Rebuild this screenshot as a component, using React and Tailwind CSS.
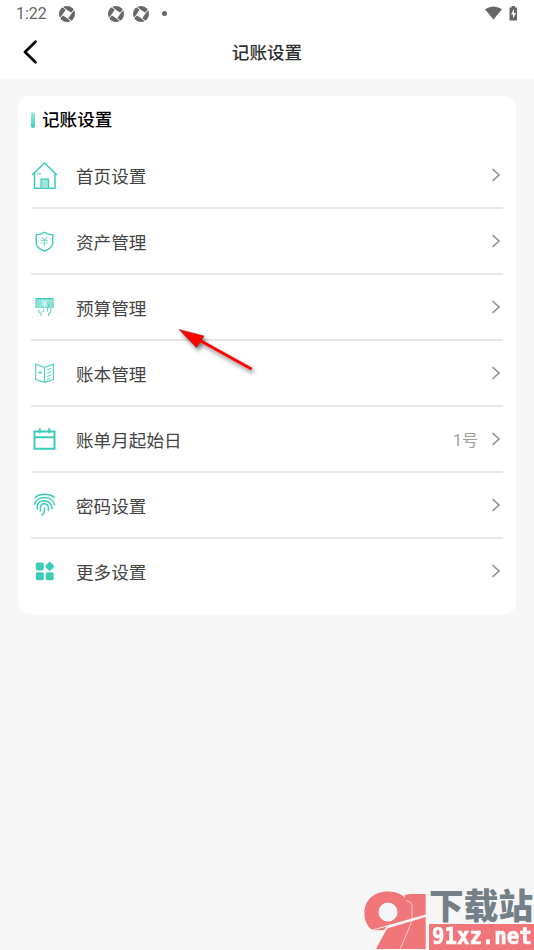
import React from "react";

const T = "#3ccdb9";

function Aperture() {
  return (
    <svg className="size-4" viewBox="0 0 16 16">
      <circle cx="8" cy="8" r="8" fill="#686868" />
      <g stroke="#fff" strokeWidth="1" fill="#fff">
        <path d="M7 3.200 12.800 7 9 12.800 3.200 9Z" stroke="none" />
        <path d="M7.500 4 3.500.8M12 7.500 15.200 3.500M8.500 12 12.500 15.200M4 8.500.8 12.500" />
      </g>
    </svg>
  );
}

const Home = () => (
  <svg className="size-7" viewBox="0 0 28 28" fill="none" stroke={T} strokeWidth="1.500">
    <path d="M1 14 13.500 2 26 14M3.500 12v15.300h20.500V12" />
    <path d="M10 27v-8.800h7.500V27" fill="#9fe6dc" strokeWidth="1.200" />
    <path d="M5.500 12.800h4.500" stroke="#9fe6dc" strokeWidth="2.200" />
  </svg>
);
const Shield = () => (
  <svg className="size-7" viewBox="0 0 28 28" fill="none" stroke={T} strokeWidth="1.400">
    <path d="M13.500 5.300c2.400 1.700 5 2.500 8.300 2.600v7.600c0 4.700-3.600 6.900-8.300 8.500-4.700-1.600-8.300-3.800-8.300-8.500V7.900c3.300-.1 5.900-.9 8.300-2.600Z" />
    <path d="m10.800 10 2.700 3.300 2.700-3.300m-2.700 3.300V19m-3.400-5.500h6.800m-6.800 2.500h6.800" stroke="#79dccf" strokeWidth="1.100" />
  </svg>
);
const Budget = () => (
  <svg className="size-7" viewBox="0 0 28 28" fill="none" stroke={T} strokeWidth="1.200">
    <path d="M4.500 5h18v10h-18Z" fill="#93e2d7" stroke="none" />
    <path d="M4.500 5.600h18" />
    <path d="M5 5.500V15M22 5.500V15" stroke="#62d7c8" strokeWidth="1" />
    <path d="m11 7 2.500 2.500L16 7m-2.500 2.500V13.500M11 10h5m-5 2h5" stroke="#effffc" strokeWidth="1" />
    <path d="M8 16.500v2.500l2 1.500v2.500M12.500 16v2l-1.500 1.200" stroke="#74dbce" />
    <path d="M16.500 18.500V16l2-5.500M19.700 15v4.200l-2 1.500v2.300" stroke="#5bd5c5" />
  </svg>
);
const Book = () => (
  <svg className="size-7" viewBox="0 0 28 28" fill="none" stroke="#55d3c3" strokeWidth="1.200">
    <path d="M13.500 8.500 4.700 5.200v15.300l8.800 2.800 8.800-2.800V5.200l-8.800 3.300v14.500" />
    <path d="m16 11 4.200-1.700M16 14.300l4.200-1.700M16 17.600l4.200-1.700M16 20.500l3-1.200M7.200 13.500h3.600M9 11.700v3.600" strokeWidth="1" />
  </svg>
);
const Calendar = () => (
  <svg className="size-7" viewBox="0 0 28 28" fill="none" stroke={T} strokeWidth="2">
    <path d="M3.500 6.500H23.500v17.300H3.500ZM3.500 12.200H23.500M8.700 3.300v5M18.300 3.300v5" />
  </svg>
);
const Finger = () => (
  <svg className="size-7" viewBox="0 0 28 28" fill="none" stroke={T} strokeWidth="1.500" strokeLinecap="round">
    <path d="M4 6.500c5.500-4.200 14-4.200 19.500 0" />
    <path d="M3.500 13.200C6 4.300 21.500 4.300 23.700 13.800" />
    <path d="M6.500 18C3.500 7.500 21 6.500 21 18" />
    <path d="M9.300 20c.6-2-.2-3 .3-4.800 1.100-3.600 7.500-3.300 7.700 1.300v3" />
    <path d="M11 24c2.800-1.500 2.500-4.300 2.500-7" />
  </svg>
);
const Grid = () => (
  <svg className="size-7" viewBox="0 0 28 28" fill={T}>
    <rect x="4.800" y="5.500" width="8" height="8" rx="1.800" />
    <rect x="4.800" y="15.300" width="8" height="8" rx="1.800" />
    <rect x="14.700" y="15.300" width="8" height="8" rx="1.800" />
    <rect x="15.200" y="5.900" width="7" height="7" rx="1.300" transform="rotate(45 18.700 9.400)" />
  </svg>
);

const rows = [
  ["首页设置", Home],
  ["资产管理", Shield],
  ["预算管理", Budget],
  ["账本管理", Book],
  ["账单月起始日", Calendar, "1号"],
  ["密码设置", Finger],
  ["更多设置", Grid],
];

export default function App() {
  return (
    <div className="relative h-[950px] w-[534px] overflow-hidden bg-[#f7f7f7] font-['Roboto','Noto_Sans_CJK_SC',sans-serif]">
      <header className="h-[78px] bg-white">
        <div className="flex h-[27px] items-center pl-4 pr-4 text-[#666]">
          <span className="w-[43px] pt-px text-[16px] leading-none">1:22</span>
          <Aperture />
          <span className="w-[33px]" />
          <Aperture />
          <span className="w-[9px]" />
          <Aperture />
          <span className="ml-[13px] size-[5px] rounded-full bg-[#666]" />
          <svg className="mb-px ml-auto h-[15px] w-[34px]" viewBox="0 0 34 15" fill="#666">
            <path d="M1 3.300Q9.500-2.300 18 3.300L9.500 13.500Z" />
            <path d="M25.500 1.500h2V0h3.500v1.500h2V14.500h-7.500Z" />
            <path d="M30 3 27 8.500h2V12.500l3-5.500h-2Z" fill="#fff" />
          </svg>
        </div>
        <div className="flex h-[50px] items-center">
          <svg className="ml-[22px] h-6 w-4" viewBox="0 0 16 24" fill="none" stroke="#000" strokeWidth="2.700" strokeLinecap="round" strokeLinejoin="round">
            <path d="M13.500 1.700 3 12l10.500 10.300" />
          </svg>
          <h1 className="mr-[38px] flex-1 pt-[3px] text-center text-[17.600px] font-medium text-[#303030]">记账设置</h1>
        </div>
      </header>
      <main className="mx-[18px] mt-[18px] h-[518px] rounded-xl bg-white px-[13px]">
        <div className="flex h-[47px] items-center">
          <span className="h-4 w-1 rounded-full bg-linear-to-b from-[#a0eae0] to-[#36cdb9]" />
          <h2 className="ml-[7px] pt-[2px] text-[17.600px] font-medium text-black">记账设置</h2>
        </div>
        {rows.map(([label, Icon, value]) => (
          <div key={label} className="flex h-[66px] items-center border-b-2 border-[#e7e7e7] last:border-transparent">
            <Icon />
            <span className="ml-[17px] pt-[4px] text-[17.600px] text-[#444]">{label}</span>
            <span className="ml-auto pt-[3px] text-[16px] text-[#a0a0a0]">{value}</span>
            <svg className="ml-[13px] mr-[2px] h-4 w-[10px]" viewBox="0 0 10 16" fill="none" stroke="#949494" strokeWidth="1.700">
              <path d="m1.500 2 6.500 6-6.500 6" />
            </svg>
          </div>
        ))}
      </main>
      <svg className="absolute left-[170px] top-[320px] h-[64px] w-[95px] drop-shadow-[2px_3px_2px_rgba(0,0,0,0.5)]" viewBox="0 0 95 64">
        <path d="M30 20.500 80.500 48.500" stroke="#f00" strokeWidth="3" strokeLinecap="round" />
        <path d="M9 9.500 34 16 31.500 20.500 26.500 27.500Z" fill="#f00" stroke="#a22" strokeWidth=".6" />
      </svg>
      <div className="absolute bottom-0 right-0 flex h-[62px] w-[174px]">
        <svg className="h-[62px] w-[69px] shrink-0" viewBox="0 0 69 62">
          <g fill="#f07679">
            <path fillRule="evenodd" d="M27 3.500c8 0 13.500 2 18 6V7l5-1h15.700v20.500L12 41.800C7 38 4.400 32.500 4.400 25 4.400 12.500 14 3.500 27 3.500Zm1 11a9.500 9.500 0 1 0 0 19 9.500 9.500 0 0 0 0-19Z" />
            <path d="M27 40.500 65.700 29v32H16Z" />
            <path d="M12.500 42.500 27 38.500 24 42Z" />
          </g>
          <path d="M46 12.500Q52 14 52 18v14Q50 39 40 61" fill="none" stroke="#f7f7f7" strokeWidth=".7" />
        </svg>
        <div className="flex flex-1 flex-col">
          <div className="h-[36px] w-[105px]">
            <span className="block whitespace-nowrap pt-[3px] text-[34.700px] font-black leading-[32px] text-[#748087]">下载站</span>
          </div>
          <div className="h-[26px] bg-[#f07679] pl-[3px]">
            <span className="block origin-left scale-x-[0.9] whitespace-nowrap font-['DejaVu_Sans_Mono',monospace] text-[23px] font-bold leading-[25px] text-white [-webkit-text-stroke:0.700px_white]">91xz.net</span>
          </div>
        </div>
      </div>
    </div>
  );
}
